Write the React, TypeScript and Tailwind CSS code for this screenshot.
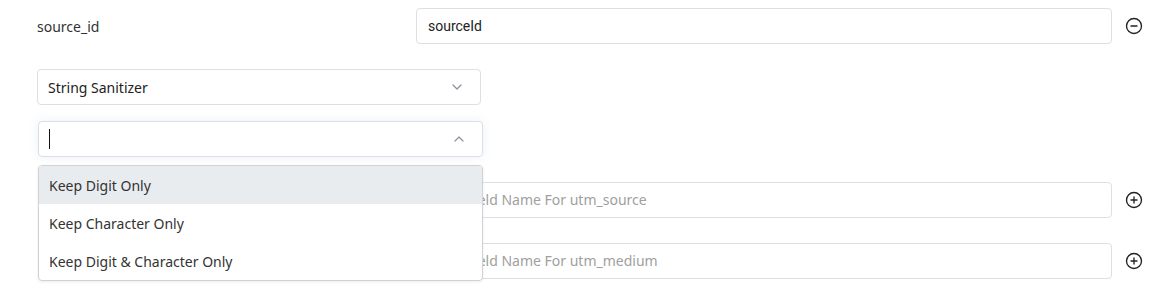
import { CircleMinus, CirclePlus } from "lucide-react";

const OPTIONS = ["Keep Digit Only", "Keep Character Only", "Keep Digit & Character Only"];

function Chevron({ up }: { up?: boolean }) {
  return (
    <svg width="10" height="6" viewBox="0 0 10 6" className="text-[#8a939c]">
      <path
        d={up ? "M1 5 L5 1 L9 5" : "M1 1 L5 5 L9 1"}
        fill="none"
        stroke="currentColor"
        strokeWidth="1.2"
        strokeLinecap="round"
        strokeLinejoin="round"
      />
    </svg>
  );
}

function FieldRow({
  label,
  value,
  placeholder,
  action,
}: {
  label?: string;
  value?: string;
  placeholder?: string;
  action: "add" | "remove";
}) {
  return (
    <div className="flex items-center">
      <div className="w-[379px] text-[14px] text-[#333]">{label}</div>
      <input
        readOnly
        value={value ?? ""}
        placeholder={placeholder}
        className="h-[36px] flex-1 rounded-[4px] border border-[#dcdfe3] bg-white px-[11px] font-['Roboto',sans-serif] text-[14px] text-[#222] outline-none placeholder:font-['Noto_Sans',sans-serif] placeholder:text-[#a0a0a0]"
      />
      <div className="flex w-[48px] pl-[13px]">
        {action === "remove" ? (
          <CircleMinus size={18} strokeWidth={1.8} className="text-[#222]" />
        ) : (
          <CirclePlus size={18} strokeWidth={1.8} className="text-[#222]" />
        )}
      </div>
    </div>
  );
}

export default function App() {
  return (
    <div className="h-[284px] w-[1160px] overflow-hidden bg-white pl-[37px] pt-[8px] font-['Noto_Sans',sans-serif]">
      <FieldRow label="source_id" value="sourceId" action="remove" />

      {/* sanitizer selects */}
      <div className="mt-[25px] flex h-[36px] w-[444px] items-center justify-between rounded-[4px] border border-[#dcdfe3] bg-white pl-[10px] pr-[18px] text-[14px] text-[#222]">
        <span>String Sanitizer</span>
        <Chevron />
      </div>

      <div className="relative mt-[16px] w-[446px]">
        <div className="ml-px flex h-[36px] items-center justify-between rounded-[4px] border border-[#dcdfe3] bg-white pl-[10px] pr-[18px] shadow-[0_0_10px_rgba(90,120,190,0.12)]">
          <span className="h-[20px] w-px bg-[#111]" />
          <Chevron up />
        </div>

        {/* open menu */}
        <div className="absolute left-px top-[44px] z-10 w-[445px] overflow-hidden rounded-[4px] border border-[#cfd3d8] bg-white text-[14px] text-[#333] shadow-[0_1px_3px_rgba(0,0,0,0.08)]">
          {OPTIONS.map((opt, i) => (
            <div
              key={opt}
              className={`flex h-[38px] items-center px-[10px] ${i === 0 ? "bg-[#e9ecef]" : ""}`}
            >
              {opt}
            </div>
          ))}
        </div>
      </div>

      <div className="mt-[25px]">
        <FieldRow placeholder="Enter Field Name For utm_source" action="add" />
      </div>
      <div className="mt-[25px]">
        <FieldRow placeholder="Enter Field Name For utm_medium" action="add" />
      </div>
    </div>
  );
}
